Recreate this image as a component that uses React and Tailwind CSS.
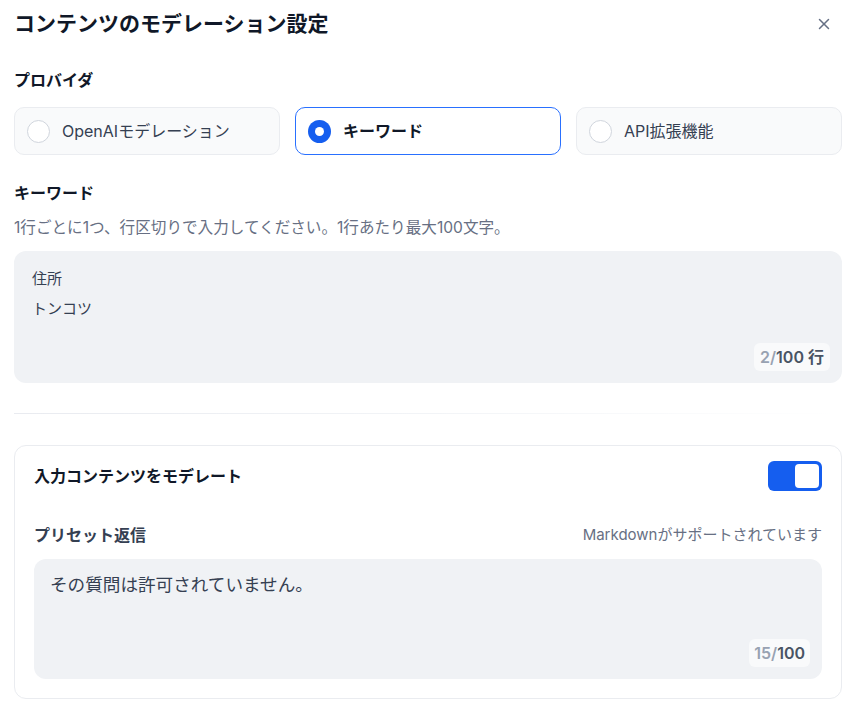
import React, { useState } from 'react';
import { X } from 'lucide-react';

const font = { fontFamily: "Inter, 'Noto Sans CJK JP', sans-serif" };

function RadioCard({ label, selected, onClick }) {
  return (
    <button
      onClick={onClick}
      className={`flex h-12 flex-1 items-center gap-3 rounded-[10px] px-3 text-left text-base ${
        selected
          ? 'border-[1.5px] border-[#2970ff] bg-white text-[#101828]'
          : 'border border-[#eaecf0] bg-[#f9fafb] text-[#354052]'
      }`}
    >
      {selected ? (
        <span className="flex h-[23px] w-[23px] items-center justify-center rounded-full bg-[#155eef]">
          <span className="h-[9px] w-[9px] rounded-full bg-white" />
        </span>
      ) : (
        <span className="h-[23px] w-[23px] rounded-full border border-[#d0d5dd] bg-white" />
      )}
      <span className={selected ? 'font-semibold' : ''}>{label}</span>
    </button>
  );
}

export default function App() {
  const [provider, setProvider] = useState('keyword');
  const [on, setOn] = useState(true);

  return (
    <div className="min-h-screen bg-white pl-[14px] pr-[4px] pt-[6px] text-[#101828]" style={font}>
      <div className="flex items-center justify-between">
        <h1 className="text-[21px] font-bold leading-9">コンテンツのモデレーション設定</h1>
        <X className="mr-[9px] h-[18px] w-[18px] text-[#667085]" strokeWidth={2} />
      </div>

      <div className="mt-[26px] text-base font-semibold leading-6">プロバイダ</div>
      <div className="mt-[15px] flex gap-[15px]">
        <RadioCard label="OpenAIモデレーション" selected={provider === 'openai'} onClick={() => setProvider('openai')} />
        <RadioCard label="キーワード" selected={provider === 'keyword'} onClick={() => setProvider('keyword')} />
        <RadioCard label="API拡張機能" selected={provider === 'api'} onClick={() => setProvider('api')} />
      </div>

      <div className="mt-[26px] text-base font-semibold leading-6">キーワード</div>
      <div className="mt-[12px] text-[15.6px] leading-[22px] text-[#676f83]">
        1行ごとに1つ、行区切りで入力してください。1行あたり最大100文字。
      </div>
      <div className="relative mt-[12px] h-[132px] rounded-xl bg-[#f0f2f5] px-[18px] py-[13px]">
        <div className="text-[15px] leading-[30px] text-[#354052]">
          <div>住所</div>
          <div>トンコツ</div>
        </div>
        <div className="absolute bottom-[12px] right-[12px] rounded-md bg-[#f9fafb] px-[6px] py-[3px] text-[16px] font-semibold leading-[22px] text-[#495464]">
          <span className="text-[#98a2b2]">2/</span>100 行
        </div>
      </div>

      <div className="mt-[30px] h-px bg-gradient-to-r from-[#e9ebf0] via-[#f2f4f7] to-white" />

      <div className="mt-[31px] rounded-xl border border-[#eaecf0] bg-white px-[19px] pb-[19px] pt-[15px]">
        <div className="flex items-center justify-between">
          <div className="text-base font-semibold">入力コンテンツをモデレート</div>
          <button
            onClick={() => setOn(!on)}
            className={`flex h-[30px] w-[54px] items-center rounded-md p-[3px] ${on ? 'justify-end bg-[#155eef]' : 'justify-start bg-[#d0d5dd]'}`}
          >
            <span className="h-6 w-6 rounded-[4px] bg-white" />
          </button>
        </div>
        <div className="mt-[32px] flex items-center justify-between">
          <div className="text-base font-semibold text-[#354052]">プリセット返信</div>
          <div className="text-[15px] text-[#676f83]">Markdownがサポートされています</div>
        </div>
        <div className="relative mt-[12px] h-[120px] rounded-xl bg-[#f0f2f5] px-[16px] py-[14px]">
          <div className="text-[17.6px] leading-6 text-[#354052]">その質問は許可されていません。</div>
          <div className="absolute bottom-[12px] right-[12px] rounded-md bg-[#f9fafb] px-[5px] py-[3px] text-[16px] font-semibold leading-[22px] text-[#495464]">
            <span className="text-[#98a2b2]">15/</span>100
          </div>
        </div>
      </div>
    </div>
  );
}
